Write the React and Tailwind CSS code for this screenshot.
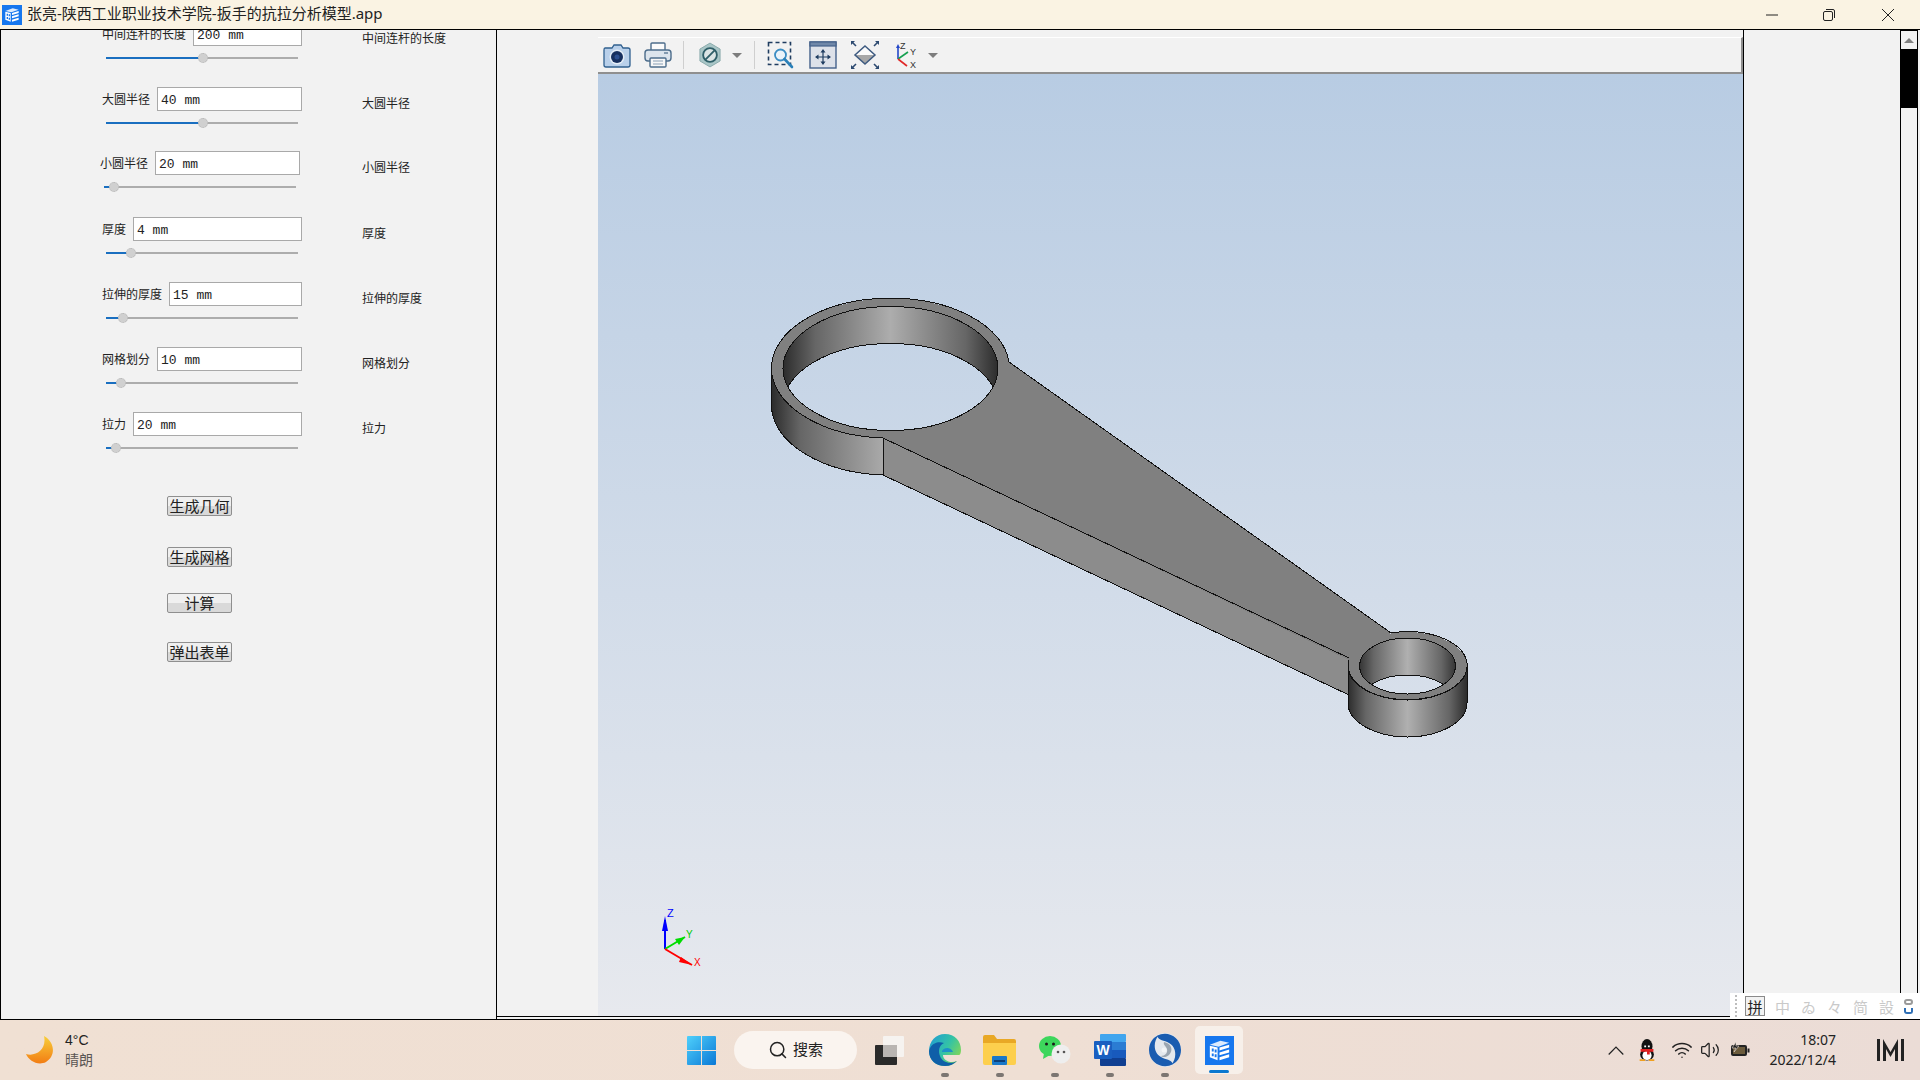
import { Search, Wifi, Volume2 } from "lucide-react";

const CJK = "font-['Liberation_Sans','Noto_Sans_CJK_SC',sans-serif]";

// thumb = distance of the slider thumb centre from the start of the track
const PARAMS = [
  { label: "中间连杆的长度", value: "200 mm", thumb: 97, box: "w-[301px] pl-[101px]", gap: "mt-[-8px]" },
  { label: "大圆半径", value: "40 mm", thumb: 97, box: "w-[301px] pl-[101px]", gap: "mt-[24px]" },
  { label: "小圆半径", value: "20 mm", thumb: 10, box: "w-[299px] pl-[99px]", gap: "mt-[23px]" },
  { label: "厚度", value: "4 mm", thumb: 25, box: "w-[301px] pl-[101px]", gap: "mt-[25px]" },
  { label: "拉伸的厚度", value: "15 mm", thumb: 17, box: "w-[301px] pl-[101px]", gap: "mt-[24px]" },
  { label: "网格划分", value: "10 mm", thumb: 15, box: "w-[301px] pl-[101px]", gap: "mt-[24px]" },
  { label: "拉力", value: "20 mm", thumb: 10, box: "w-[301px] pl-[101px]", gap: "mt-[24px]" },
];

const BUTTONS = [
  { text: "生成几何", gap: "mt-[43px]" },
  { text: "生成网格", gap: "mt-[31px]" },
  { text: "计算", gap: "mt-[26px]" },
  { text: "弹出表单", gap: "mt-[29px]" },
];

const AppIcon = ({ className }) => (
  <svg viewBox="0 0 30 30" className={className}>
    <rect width="30" height="30" fill="#1677ee" />
    <path d="M5 9 L16 5 L25 7 L14 11 Z" fill="#fff" opacity="0.85" />
    <path d="M5 10 L13 12 V25 L5 22 Z" fill="#fff" />
    <path d="M7 13 h2 v3 h-2 z M10 14 h2 v3 h-2 z M7 18 h2 v3 h-2 z M10 19 h2 v3 h-2 z" fill="#1677ee" />
    <path d="M15 12 L25 9 V12 L15 15 Z M15 17 L25 14 V17 L15 20 Z M15 22 L25 19 V22 L15 25 Z" fill="#fff" />
  </svg>
);

const Slider = ({ thumb }) => (
  <div className="relative mx-[4px] mt-[7px] flex h-[10px] items-center">
    <div className="h-[2px] w-full bg-[#adadad]" />
    <div className="absolute left-0 h-[2px] bg-[#1a6fc0]" style={{ width: thumb }} />
    <div
      className="absolute h-[10px] w-[10px] rounded-full border border-dotted border-[#b5b5b5] bg-[#d0d0d0]"
      style={{ left: thumb - 5 }}
    />
  </div>
);

const ParamRow = ({ label, value, thumb, box, gap }) => (
  <div className={`flex shrink-0 ${gap}`}>
    <div className="w-[361px]">
      <div className={box}>
        <div className="flex h-[24px] items-center gap-[7px]">
          <span className="mt-[2px] whitespace-nowrap text-[12px] leading-[18px] text-[#222]">{label}</span>
          <input
            readOnly
            value={value}
            className="h-[24px] w-0 flex-1 border border-[#a9a9a9] bg-white pt-[2px] pl-[3px] font-['Liberation_Mono',monospace] text-[13px] text-[#222] outline-none"
          />
        </div>
        <Slider thumb={thumb} />
      </div>
    </div>
    <span className="whitespace-nowrap pt-[8px] text-[12px] leading-[18px] text-[#222]">{label}</span>
  </div>
);

const ToolSeparator = ({ className }) => <div className={`h-[28px] w-px bg-[#cfcfcf] ${className}`} />;
const Caret = ({ className }) => (
  <svg viewBox="0 0 10 5" className={`h-[5px] w-[10px] ${className}`}>
    <path d="M0 0 H10 L5 5 Z" fill="#7d7d7d" />
  </svg>
);

const Toolbar = () => (
  <div className="flex h-[37px] shrink-0 items-center border-t border-r-2 border-b-2 border-t-white border-r-[#8f8f8f] border-b-[#8f8f8f] bg-[#f2f2f2] pl-[5px]">
    {/* camera */}
    <svg viewBox="0 0 28 28" className="h-[28px] w-[28px]">
      <path d="M2 7 Q1 7 1 9 V24 Q1 26 3 26 H25 Q27 26 27 24 V9 Q27 7 25 7 H20 L18 4 H11 L9 7 Z" fill="#b9d0ea" stroke="#30608f" strokeWidth="1.3" />
      <circle cx="14" cy="16" r="7.5" fill="#e4edf6" />
      <circle cx="14" cy="16" r="6" fill="#17305f" />
      <circle cx="14" cy="16" r="2.5" fill="#2c4f8f" />
    </svg>
    {/* printer */}
    <svg viewBox="0 0 28 28" className="ml-[13px] h-[28px] w-[28px]">
      <rect x="7" y="2" width="14" height="9" rx="1" fill="#fbfbfb" stroke="#4d6d8c" strokeWidth="1.4" />
      <rect x="1" y="9" width="26" height="11" rx="3" fill="#dce4ec" stroke="#4d6d8c" strokeWidth="1.4" />
      <rect x="6" y="17" width="16" height="9" rx="1" fill="#f7f7f7" stroke="#4d6d8c" strokeWidth="1.4" />
      <path d="M9 20 H19 M9 23 H19" stroke="#8aa0b5" strokeWidth="1.2" />
      <path d="M20 12 H24" stroke="#5d7a95" strokeWidth="1.4" />
    </svg>
    <ToolSeparator className="ml-[11px]" />
    {/* hide / prohibit */}
    <svg viewBox="0 0 24 28" className="ml-[15px] h-[26px] w-[22px]">
      <path d="M12 1 L23 7.5 V20.5 L12 27 L1 20.5 V7.5 Z" fill="#a9c6c7" stroke="#88a9aa" />
      <circle cx="12" cy="14" r="7.5" fill="#dbe5e5" stroke="#2f5f68" strokeWidth="2" />
      <path d="M7 19 L17 9" stroke="#2f5f68" strokeWidth="2" />
    </svg>
    <Caret className="ml-[11px]" />
    <ToolSeparator className="ml-[12px]" />
    {/* zoom box */}
    <svg viewBox="0 0 28 28" className="ml-[12px] h-[28px] w-[28px]">
      <rect x="1.5" y="1.5" width="22" height="22" fill="none" stroke="#1f3c60" strokeWidth="1.6" strokeDasharray="4 3" />
      <circle cx="13.5" cy="14" r="5.5" fill="#eaf3fa" stroke="#3b8dc4" strokeWidth="1.8" />
      <path d="M17.5 18 L25 26" stroke="#2a80b9" strokeWidth="2.6" strokeLinecap="round" />
    </svg>
    {/* zoom extents */}
    <svg viewBox="0 0 28 28" className="ml-[14px] h-[28px] w-[28px]">
      <rect x="1" y="1" width="26" height="26" fill="#dde1e9" stroke="#45618a" strokeWidth="1.4" />
      <rect x="1" y="1" width="26" height="4" fill="#6f87a8" stroke="#45618a" strokeWidth="1.2" />
      <path d="M14 10 V22 M8 16 H20" stroke="#1f3c60" strokeWidth="1.2" />
      <path d="M14 8 L11.5 11.5 H16.5 Z M14 24 L11.5 20.5 H16.5 Z M6 16 L9.5 13.5 V18.5 Z M22 16 L18.5 13.5 V18.5 Z" fill="#1f3c60" />
    </svg>
    {/* isometric view */}
    <svg viewBox="0 0 28 28" className="ml-[14px] h-[28px] w-[28px]">
      <path d="M14 5 L24 14 H4 Z" fill="#fbfbfb" />
      <path d="M4 14 H24 L14 23 Z" fill="#a8a8a8" />
      <path d="M14 5 L24 14 L14 23 L4 14 Z" fill="none" stroke="#3d5a80" strokeWidth="1.5" />
      <path d="M1 1 L5 5 M27 1 L23 5 M1 27 L5 23 M27 27 L23 23" stroke="#2d4a70" strokeWidth="1.6" />
      <path d="M0 0 H4 L0 4 Z M28 0 H24 L28 4 Z M0 28 H4 L0 24 Z M28 28 H24 L28 24 Z" fill="#2d4a70" />
    </svg>
    {/* axes */}
    <svg viewBox="0 0 28 28" className="ml-[14px] h-[28px] w-[28px]">
      <path d="M5 18 V5" stroke="#2347c8" strokeWidth="1.6" />
      <path d="M5 3 L3 7 H7 Z" fill="#2347c8" />
      <path d="M5 18 L15 11" stroke="#15a050" strokeWidth="1.6" />
      <path d="M5 18 L14 25" stroke="#e02828" strokeWidth="1.6" />
      <text x="7" y="8" fontSize="9" fill="#333" fontFamily="Liberation Sans">Z</text>
      <text x="17" y="14" fontSize="9" fill="#333" fontFamily="Liberation Sans">Y</text>
      <text x="17" y="27" fontSize="9" fill="#333" fontFamily="Liberation Sans">X</text>
    </svg>
    <Caret className="ml-[7px]" />
  </div>
);

// drawn in screen coordinates so it can be compared with the reference directly
const Wrench = () => (
  <svg viewBox="598 74 1145 942" className="absolute inset-0 h-full w-full">
    <defs>
      <linearGradient id="bgFill" gradientUnits="userSpaceOnUse" x1="0" y1="74" x2="0" y2="1016">
        <stop offset="0" stopColor="#b8cce3" />
        <stop offset="1" stopColor="#e7e9ee" />
      </linearGradient>
      <linearGradient id="bigOuter" gradientUnits="userSpaceOnUse" x1="772" y1="0" x2="885" y2="0">
        <stop offset="0" stopColor="#2c2c2c" />
        <stop offset="0.25" stopColor="#666" />
        <stop offset="1" stopColor="#ababab" />
      </linearGradient>
      <linearGradient id="bigInner" gradientUnits="userSpaceOnUse" x1="783" y1="0" x2="998" y2="0">
        <stop offset="0" stopColor="#2c2c2c" />
        <stop offset="0.15" stopColor="#666" />
        <stop offset="0.5" stopColor="#adadad" />
        <stop offset="0.85" stopColor="#666" />
        <stop offset="1" stopColor="#2c2c2c" />
      </linearGradient>
      <linearGradient id="smallOuter" gradientUnits="userSpaceOnUse" x1="1348" y1="0" x2="1467" y2="0">
        <stop offset="0" stopColor="#2c2c2c" />
        <stop offset="0.15" stopColor="#666" />
        <stop offset="0.5" stopColor="#b0b0b0" />
        <stop offset="0.85" stopColor="#666" />
        <stop offset="1" stopColor="#2c2c2c" />
      </linearGradient>
      <linearGradient id="smallInner" gradientUnits="userSpaceOnUse" x1="1359" y1="0" x2="1456" y2="0">
        <stop offset="0" stopColor="#333" />
        <stop offset="0.15" stopColor="#666" />
        <stop offset="0.5" stopColor="#b0b0b0" />
        <stop offset="0.85" stopColor="#666" />
        <stop offset="1" stopColor="#333" />
      </linearGradient>
      <clipPath id="bigClip">
        <ellipse cx="890.5" cy="368.5" rx="107.5" ry="62" />
      </clipPath>
      <clipPath id="smallClip">
        <ellipse cx="1407.5" cy="666" rx="48" ry="28" />
      </clipPath>
    </defs>

    <g shapeRendering="crispEdges">
      {/* side of the arm */}
      <path d="M883 438 L1349 658 V695 L883 475 Z" fill="#8c8c8c" stroke="#111" />

      {/* outer walls */}
      <path d="M771.5 368.5 V405.5 A119 70 0 0 0 883 475 V438 A119 70 0 0 1 771.5 368.5 Z" fill="url(#bigOuter)" stroke="#111" />
      <path d="M1348 666 V703 A59.5 34 0 0 0 1467 703 V666 A59.5 34 0 0 1 1348 666 Z" fill="url(#smallOuter)" stroke="#111" />

      {/* top face */}
      <ellipse cx="890.5" cy="368.5" rx="119" ry="70" fill="#808080" />
      <ellipse cx="1407.5" cy="666" rx="59.5" ry="34" fill="#808080" />
      <path d="M1009 362 L1391 633 L1349 660 L883 438 Z" fill="#808080" />
      <path d="M1009 362 A119 70 0 1 0 883 438 L1349 658" fill="none" stroke="#111" />
      <path d="M1009 362 L1391 633 A59.5 34 0 1 1 1349 660" fill="none" stroke="#111" />

      {/* big hole */}
      <ellipse cx="890.5" cy="368.5" rx="107.5" ry="62" fill="url(#bigInner)" stroke="#111" />
      <ellipse cx="890.5" cy="405.5" rx="107.5" ry="62" fill="url(#bgFill)" stroke="#111" clipPath="url(#bigClip)" />
      <path d="M783 368.5 A107.5 62 0 0 0 998 368.5" fill="none" stroke="#111" />

      {/* small hole */}
      <ellipse cx="1407.5" cy="666" rx="48" ry="28" fill="url(#smallInner)" stroke="#111" />
      <ellipse cx="1407.5" cy="703" rx="48" ry="28" fill="url(#bgFill)" stroke="#111" clipPath="url(#smallClip)" />
      <path d="M1359.5 666 A48 28 0 0 0 1455.5 666" fill="none" stroke="#111" />
    </g>

    {/* corner triad */}
    <path d="M665 949 V920" stroke="#0000ff" strokeWidth="2" />
    <path d="M665 916 L662 931 H668 Z" fill="#0000ff" />
    <path d="M665 949 L685 937" stroke="#00dd00" strokeWidth="2" />
    <path d="M685 937 L675 939 L679 945 Z" fill="#00dd00" />
    <path d="M665 949 L692 965" stroke="#ff0000" strokeWidth="2" />
    <path d="M692 965 L681 957 L679 962 Z" fill="#ff0000" />
    <text x="667" y="917" fontSize="11" fill="#0000ff" fontFamily="Liberation Sans">Z</text>
    <text x="686" y="938" fontSize="10" fill="#00cc00" fontFamily="Liberation Sans">Y</text>
    <text x="694" y="966" fontSize="10" fill="#ff0000" fontFamily="Liberation Sans">X</text>
  </svg>
);

const TaskIcon = ({ children, dot = true }) => (
  <div className="relative flex h-[48px] w-[55px] shrink-0 items-center justify-center">
    {children}
    {dot && <div className="absolute bottom-[-3px] h-[4px] w-[8px] rounded-full bg-[#7c7672]" />}
  </div>
);

const Taskbar = () => (
  <div className="flex h-[60px] shrink-0 items-center bg-[linear-gradient(90deg,#f0e0d3,#efdfd4_55%,#ebdcd6)]">
    {/* weather */}
    <div className="flex w-[687px] shrink-0 items-center pl-[26px]">
      <svg viewBox="0 0 28 28" className="h-[28px] w-[28px]">
        <defs>
          <linearGradient id="moon" x1="0" y1="0" x2="0" y2="1">
            <stop offset="0" stopColor="#f8cf3a" />
            <stop offset="1" stopColor="#f27d14" />
          </linearGradient>
        </defs>
        <path d="M18 0 C29 6 30 20 20 26 C12 30 3 25 0 18 C10 21 21 13 18 0 Z" fill="url(#moon)" />
      </svg>
      <div className="ml-[11px] text-[14px] leading-[20px]">
        <div className="text-[#222]">4°C</div>
        <div className="text-[#5a5653]">晴朗</div>
      </div>
    </div>

    {/* start, search and pinned apps */}
    <svg viewBox="0 0 29 29" className="h-[29px] w-[29px] shrink-0">
      <defs>
        <linearGradient id="win" x1="0" y1="0" x2="1" y2="1">
          <stop offset="0" stopColor="#4fd0fb" />
          <stop offset="1" stopColor="#0a78d6" />
        </linearGradient>
      </defs>
      <path d="M1 0 H14 V14 H0 V1 Q0 0 1 0 Z M15 0 H28 Q29 0 29 1 V14 H15 Z M0 15 H14 V29 H1 Q0 29 0 28 Z M15 15 H29 V28 Q29 29 28 29 H15 Z" fill="url(#win)" />
    </svg>
    <div className="ml-[18px] flex h-[38px] w-[123px] shrink-0 items-center justify-center gap-[5px] rounded-full bg-[#faf4ef] text-[15px] text-[#222]">
      <Search size={20} strokeWidth={1.8} color="#222" />
      <span>搜索</span>
    </div>
    <div className="ml-[5px] flex items-center">
      <TaskIcon dot={false}>
        <svg viewBox="0 0 29 29" className="h-[29px] w-[29px]">
          <rect x="0" y="9" width="22" height="20" rx="1" fill="#2a2a2a" />
          <rect x="8" y="0" width="21" height="21" rx="1" fill="#f6f3f0" />
          <rect x="8" y="9" width="14" height="12" fill="#b9b5b2" />
        </svg>
      </TaskIcon>
      <TaskIcon>
        <svg viewBox="0 0 32 32" className="h-[32px] w-[32px]">
          <defs>
            <linearGradient id="edgeA" x1="0" y1="0" x2="1" y2="0.6">
              <stop offset="0" stopColor="#1f9ad8" />
              <stop offset="0.6" stopColor="#34c3a5" />
              <stop offset="1" stopColor="#7ed65a" />
            </linearGradient>
          </defs>
          <path d="M0 17 C0 7 7 0 16 0 C26 0 32 7 32 16 C32 19 31 21 30 21 H14 C14 26 21 30 28 27 C25 30 21 32 16 32 C7 32 0 26 0 17 Z" fill="url(#edgeA)" />
          <path d="M0 17 C2 9 9 7 15 9 C10 11 9 17 11 22 C13 28 21 31 28 27 C25 30 21 32 16 32 C7 32 0 26 0 17 Z" fill="#0f5fa8" />
          <path d="M13 17 C15 13 22 13 24 18 L13 18 Z" fill="#1d8fc9" />
        </svg>
      </TaskIcon>
      <TaskIcon>
        <svg viewBox="0 0 33 30" className="h-[30px] w-[33px]">
          <path d="M0 2 Q0 0 2 0 H11 L14 4 H31 Q33 4 33 6 V10 H0 Z" fill="#e9a825" />
          <path d="M0 8 H33 V28 Q33 30 31 30 H2 Q0 30 0 28 Z" fill="#fdcf4d" />
          <rect x="9" y="21" width="15" height="9" rx="1" fill="#1a78c8" />
          <rect x="11" y="25" width="11" height="2" fill="#0d3f78" />
        </svg>
      </TaskIcon>
      <TaskIcon>
        <svg viewBox="0 0 32 28" className="h-[28px] w-[32px]">
          <ellipse cx="11" cy="10" rx="11" ry="10" fill="#3dd65c" />
          <path d="M5 17 L4 23 L11 19 Z" fill="#3dd65c" />
          <circle cx="7.5" cy="8" r="1.5" fill="#1a1a1a" />
          <circle cx="14.5" cy="8" r="1.5" fill="#1a1a1a" />
          <circle cx="22" cy="18" r="9.5" fill="#eeeeee" />
          <circle cx="19" cy="16" r="1.3" fill="#555" />
          <circle cx="25" cy="16" r="1.3" fill="#555" />
        </svg>
      </TaskIcon>
      <TaskIcon>
        <svg viewBox="0 0 32 32" className="h-[32px] w-[32px]">
          <rect x="6" y="0" width="26" height="8" rx="1" fill="#41a5ee" />
          <rect x="6" y="8" width="26" height="8" fill="#2b7cd3" />
          <rect x="6" y="16" width="26" height="8" fill="#185abd" />
          <rect x="6" y="24" width="26" height="8" rx="1" fill="#103f91" />
          <rect x="0" y="7" width="18" height="18" rx="1" fill="#1a5fc0" />
          <text x="9" y="21" textAnchor="middle" fontSize="14" fontWeight="700" fill="#fff" fontFamily="Liberation Sans">W</text>
        </svg>
      </TaskIcon>
      <TaskIcon>
        <svg viewBox="0 0 32 34" className="h-[34px] w-[32px]">
          <ellipse cx="16" cy="17" rx="16" ry="17" fill="#e4e8ed" />
          <path d="M8 3 C18 -3 32 4 32 17 C32 24 28 30 22 32 C28 26 28 14 20 10 C15 7 10 8 8 3 Z" fill="#1a5cb0" />
          <path d="M8 3 C18 -3 32 4 32 17 C32 24 28 30 22 32 C28 26 28 14 20 10 C15 7 10 8 8 3 Z" fill="#1a5cb0" transform="rotate(180 16 17)" />
          <path d="M15 9 C22 10 25 17 20 22 C18 24 14 25 12 23 C16 23 19 20 18 16 C17 13 14 12 15 9 Z" fill="#9aa5b0" />
          <circle cx="15" cy="17" r="2.5" fill="#f2f4f6" />
        </svg>
      </TaskIcon>
      <div className="relative ml-[3px] flex h-[48px] w-[48px] shrink-0 items-center justify-center rounded-[5px] bg-[#f7f0ea]">
        <AppIcon className="h-[29px] w-[29px]" />
        <div className="absolute bottom-[1px] h-[3px] w-[20px] rounded-full bg-[#0a78d0]" />
      </div>
    </div>

    {/* tray */}
    <div className="ml-auto flex items-center pr-[16px]">
      <svg viewBox="0 0 16 9" className="h-[9px] w-[16px] shrink-0">
        <path d="M0.7 8.5 L8 1 L15.3 8.5" fill="none" stroke="#222" strokeWidth="1.2" />
      </svg>
      <svg viewBox="0 0 18 24" className="ml-[14px] h-[22px] w-[18px] shrink-0">
        <ellipse cx="9" cy="8" rx="6" ry="8" fill="#111" />
        <ellipse cx="9" cy="17" rx="7.5" ry="6.5" fill="#111" />
        <ellipse cx="9" cy="18" rx="5" ry="5" fill="#fff" />
        <path d="M2 11 H16 V14 H12 V17 H9 V14 H2 Z" fill="#e02020" />
        <path d="M6 7 h2 v2 h-2 z M10 7 h2 v2 h-2 z" fill="#fff" />
        <path d="M1 22 H7 V24 H1 Z M11 22 H17 V24 H11 Z" fill="#f0a020" />
      </svg>
      <Wifi size={22} strokeWidth={1.7} color="#222" className="ml-[15px] shrink-0" />
      <Volume2 size={20} strokeWidth={1.5} color="#222" className="ml-[7px] shrink-0" />
      <svg viewBox="0 0 20 16" className="ml-[10px] h-[16px] w-[20px] shrink-0">
        <rect x="1" y="3" width="16" height="11" rx="2" fill="#222" />
        <rect x="3" y="5" width="12" height="7" fill="#6b5b3c" />
        <rect x="17.5" y="6.5" width="2" height="4" fill="#222" />
        <path d="M6 0 L2 6 H6 L4 10 L9 4 H6 Z" fill="#222" stroke="#efe0d6" strokeWidth="0.6" />
      </svg>
      <div className="ml-[18px] w-[68px] text-right font-['Noto_Sans',sans-serif] text-[14px] leading-[20px] text-[#222]">
        <div>18:07</div>
        <div className="whitespace-nowrap">2022/12/4</div>
      </div>
      <svg viewBox="0 0 27 22" className="ml-[41px] h-[22px] w-[27px] shrink-0">
        <path d="M0 0 H3 V22 H0 Z M24 0 H27 V22 H24 Z" fill="#222" />
        <path d="M6 0 L13.5 13 L21 0 V22 H18 V10 L13.5 18 L9 10 V22 H6 Z" fill="#222" />
      </svg>
    </div>
  </div>
);

const ImeBar = () => (
  <div className="absolute right-0 bottom-0 flex h-[26px] w-[190px] items-center bg-white pl-[5px] font-['Noto_Sans_CJK_SC',sans-serif] text-[15px] text-[#c9c9c9]">
    <div className="h-[22px] w-[2px] border-l-2 border-dotted border-[#bdbdbd]" />
    <div className="ml-[8px] flex h-[20px] w-[20px] items-center justify-center border border-[#8a8a8a] bg-[#f2f2f2] text-[15px] leading-none text-[#222]">
      拼
    </div>
    <span className="ml-[9px] w-[17px] text-center leading-none">中</span>
    <span className="ml-[9px] w-[17px] text-center leading-none">ゐ</span>
    <span className="ml-[9px] w-[17px] text-center leading-none">々</span>
    <span className="ml-[9px] w-[17px] text-center leading-none">简</span>
    <span className="ml-[9px] w-[17px] text-center leading-none">設</span>
    <div className="ml-[9px] flex flex-col gap-[3px]">
      <div className="h-[6px] w-[9px] rounded-full border-2 border-[#9a9a9a]" />
      <div className="h-[6px] w-[9px] rounded-b-[3px] border-2 border-t-0 border-[#2f6fb5]" />
    </div>
  </div>
);

export default function App() {
  return (
    <div className={`flex h-screen w-full flex-col overflow-hidden bg-[#f2f2f2] ${CJK}`}>
      {/* window title */}
      <div className="flex h-[30px] shrink-0 items-center border-b border-black bg-[#faf3e3] pl-[2px]">
        <AppIcon className="h-[20px] w-[20px] shrink-0" />
        <span className="ml-[5px] pb-[2px] font-['Noto_Sans','Noto_Sans_CJK_SC',sans-serif] text-[15px] text-[#222]">
          张亮-陕西工业职业技术学院-扳手的抗拉分析模型.app
        </span>
        <svg viewBox="0 0 12 12" className="ml-auto mr-[45px] h-[12px] w-[12px]">
          <path d="M0 6 H12" stroke="#222" />
        </svg>
        <svg viewBox="0 0 12 12" className="mr-[47px] h-[12px] w-[12px]">
          <rect x="0.5" y="2.5" width="9" height="9" rx="1.5" fill="none" stroke="#222" />
          <path d="M3 0.5 H10 Q11.5 0.5 11.5 2 V9" fill="none" stroke="#222" />
        </svg>
        <svg viewBox="0 0 12 12" className="mr-[26px] h-[12px] w-[12px]">
          <path d="M0 0 L12 12 M12 0 L0 12" stroke="#222" />
        </svg>
      </div>

      {/* application window */}
      <div className="relative flex min-h-0 flex-1 border-b border-black">
        {/* parameter form */}
        <div className="flex w-[497px] shrink-0 flex-col overflow-hidden border-x border-black bg-[#f2f2f2]">
          {PARAMS.map((p) => (
            <ParamRow key={p.label} {...p} />
          ))}
          <div className="flex flex-col pl-[166px]">
            {BUTTONS.map((b) => (
              <button
                key={b.text}
                className={`flex h-[20px] w-[65px] items-center justify-center rounded-[2px] border border-[#8f8f8f] bg-[linear-gradient(180deg,#f0f0f0_50%,#d9d9d9_50%)] text-[15px] leading-none text-[#222] ${b.gap}`}
              >
                {b.text}
              </button>
            ))}
          </div>
        </div>

        {/* graphics pane */}
        <div className="flex w-[1247px] shrink-0 flex-col border-r border-black pb-[2px]">
          <div className="flex min-h-0 flex-1 flex-col border-b border-black pt-[7px] pl-[101px]">
            <Toolbar />
            <div className="relative min-h-0 flex-1 bg-[linear-gradient(180deg,#b8cce3,#e7e9ee)]">
              <Wrench />
            </div>
          </div>
        </div>

        {/* right pane with its scroll bar */}
        <div className="flex min-w-0 flex-1 justify-end pr-[2px] pb-[2px]">
          <div className="flex w-[18px] flex-col border-x border-t border-black bg-[#f2f2f2]">
            <div className="flex h-[18px] items-center justify-center">
              <svg viewBox="0 0 10 5" className="h-[5px] w-[10px]">
                <path d="M0 5 H10 L5 0 Z" fill="#808080" />
              </svg>
            </div>
            <div className="h-[59px] bg-black" />
          </div>
        </div>

        <ImeBar />
      </div>

      <Taskbar />
    </div>
  );
}
